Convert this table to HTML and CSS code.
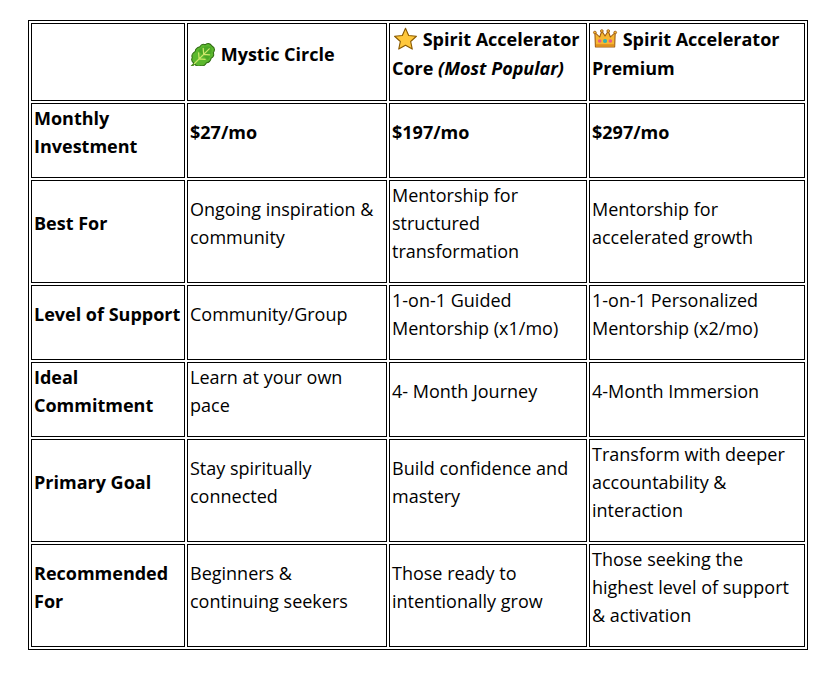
FILE: index.html
```html
<!DOCTYPE html>
<html lang="en">
<head>
<meta charset="utf-8">
<title>Membership comparison</title>
<link rel="stylesheet" href="styles.css">
</head>
<body>
<main class="page">
<table class="plans">
  <thead>
    <tr class="head">
      <th class="col-label"></th>
      <th class="col-mystic"><p><svg class="emoji" viewBox="0 0 26 24" aria-hidden="true"><g transform="translate(4.5 21.5) rotate(-45) scale(1.3 1.15)"><path d="M-3,0 L1,0" stroke="#4e8f1e" stroke-width="1.8" stroke-linecap="round"/><path d="M0,0 Q-1,-4 2,-5 Q3,-8 7,-7 Q9,-9 12,-7 Q15,-8 16,-5 Q20,-4 19,0 Q20,4 16,5 Q15,8 12,7 Q9,9 7,7 Q3,8 2,5 Q-1,4 0,0 Z" fill="#5cb82e" stroke="#2f6b12" stroke-width="0.85"/><path d="M9,-6 Q16,-5 18,0 Q16,5 9,6 Z" fill="#3f9a1f" opacity="0.55"/><path d="M0,0 L16,0 M5,0 L8,-4 M5,0 L8,4 M10,0 L13,-4 M10,0 L13,4" stroke="#cde86a" stroke-width="1" fill="none" stroke-linecap="round"/></g></svg> Mystic Circle</p></th>
      <th class="col-core"><p><svg class="emoji" viewBox="-1.5 0 26 24" aria-hidden="true"><path d="M12,1.3 L15.17,8.43 L22.94,9.25 L17.14,14.47 L18.76,22.1 L12,18.2 L5.24,22.1 L6.86,14.47 L1.06,9.25 L8.83,8.43 Z" fill="#ffc83d" stroke="#8a5a00" stroke-width="1.1" stroke-linejoin="round"/></svg> Spirit Accelerator<br>Core <em>(Most Popular)</em></p></th>
      <th class="col-premium"><p><svg class="emoji" viewBox="0 0 26 24" aria-hidden="true"><g transform="translate(0.2 0) scale(1.07 1)"><path d="M2.5,5.5 L7,10 L9,4 L12,9 L15,4 L17,10 L21.5,5.5 L21,20 L3,20 Z" fill="#f7b731" stroke="#9c5a12" stroke-width="1" stroke-linejoin="round"/><rect x="3.4" y="17.2" width="17.2" height="2.4" fill="#e0901e"/><circle cx="2.5" cy="5.5" r="1.3" fill="#f7b731" stroke="#9c5a12" stroke-width="0.8"/><circle cx="9" cy="4" r="1.3" fill="#f7b731" stroke="#9c5a12" stroke-width="0.8"/><circle cx="15" cy="4" r="1.3" fill="#f7b731" stroke="#9c5a12" stroke-width="0.8"/><circle cx="21.5" cy="5.5" r="1.3" fill="#f7b731" stroke="#9c5a12" stroke-width="0.8"/><circle cx="7" cy="14" r="1.7" fill="#e8588c"/><circle cx="12" cy="14" r="1.9" fill="#2fb3b0"/><circle cx="17" cy="14" r="1.7" fill="#e8588c"/></g></svg> Spirit Accelerator<br>Premium</p></th>
    </tr>
  </thead>
  <tbody>
    <tr>
      <th><p>Monthly<br>Investment</p></th>
      <td class="price"><p>$27/mo</p></td>
      <td class="price"><p>$197/mo</p></td>
      <td class="price"><p>$297/mo</p></td>
    </tr>
    <tr>
      <th><p>Best For</p></th>
      <td><p>Ongoing inspiration &amp;<br>community</p></td>
      <td><p>Mentorship for<br>structured<br>transformation</p></td>
      <td><p>Mentorship for<br>accelerated growth</p></td>
    </tr>
    <tr>
      <th><p>Level of Support</p></th>
      <td><p>Community/Group</p></td>
      <td><p>1-on-1 Guided<br>Mentorship (x1/mo)</p></td>
      <td><p>1-on-1 Personalized<br>Mentorship (x2/mo)</p></td>
    </tr>
    <tr>
      <th><p>Ideal<br>Commitment</p></th>
      <td><p>Learn at your own<br>pace</p></td>
      <td><p>4- Month Journey</p></td>
      <td><p>4-Month Immersion</p></td>
    </tr>
    <tr>
      <th><p>Primary Goal</p></th>
      <td><p>Stay spiritually<br>connected</p></td>
      <td><p>Build confidence and<br>mastery</p></td>
      <td><p>Transform with deeper<br>accountability &amp;<br>interaction</p></td>
    </tr>
    <tr>
      <th><p>Recommended<br>For</p></th>
      <td><p>Beginners &amp;<br>continuing seekers</p></td>
      <td><p>Those ready to<br>intentionally grow</p></td>
      <td><p>Those seeking the<br>highest level of support<br>&amp; activation</p></td>
    </tr>
  </tbody>
</table>
</main>
</body>
</html>
```

FILE: styles.css
```css
* {
  box-sizing: border-box;
}

body {
  margin: 0;
  background: #ffffff;
  color: #000000;
  font-family: "Open Sans", "Noto Sans", sans-serif;
}

.page {
  padding: 20px 0 0 28px;
}

.plans {
  width: 780px;
  table-layout: fixed;
  border-collapse: separate;
  border-spacing: 2px;
  border: 1px solid #000000;
}

.plans th,
.plans td {
  border: 1px solid #000000;
  padding: 0 2px;
  vertical-align: middle;
  text-align: left;
  font-size: 18px;
  line-height: 28px;
  white-space: nowrap;
}

.plans th {
  font-weight: 700;
}

.plans td {
  font-weight: 400;
}

.plans td.price {
  font-weight: 700;
}

.plans p {
  margin: 0 0 17px;
}

.plans em {
  font-style: italic;
}

.head th {
  line-height: 29px;
  padding-top: 1px;
}

.col-label {
  width: 154px;
}

.col-mystic {
  width: 200px;
}

.col-core {
  width: 198px;
}

.col-premium {
  width: 216px;
}

.emoji {
  width: 26px;
  height: 24px;
  vertical-align: -5px;
}
```
